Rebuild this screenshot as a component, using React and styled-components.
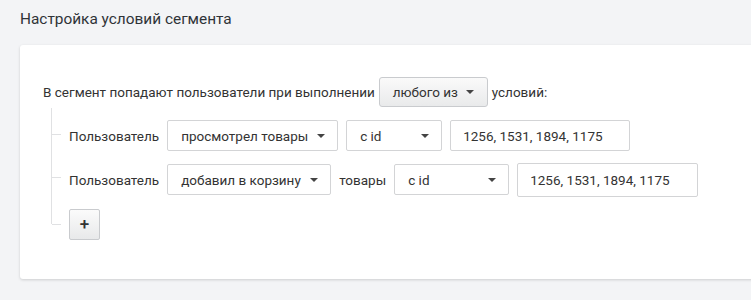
import React from "react";
import styled, { createGlobalStyle } from "styled-components";

const Global = createGlobalStyle`
  html, body { margin: 0; padding: 0; background: #f3f4f6; }
  body { font-family: Roboto, "Noto Sans", Arial, sans-serif; color: #333; }
`;

const Page = styled.div`
  width: 751px;
  height: 300px;
  overflow: hidden;
  box-sizing: border-box;
  padding: 10px 0 0 20px;
`;

const Title = styled.h2`
  margin: 0;
  font-size: 15.4px;
  font-weight: 400;
  line-height: 18px;
  color: #2f3338;
`;

const Card = styled.div`
  margin-top: 17px;
  width: 760px;
  height: 234px;
  box-sizing: border-box;
  background: #fff;
  border-radius: 3px;
  box-shadow: 0 1px 3px rgba(0, 0, 0, 0.16);
  padding: 32px 0 0 23px;
  font-size: 13.5px;
  color: #333;
`;

const Line = styled.div`
  display: flex;
  align-items: center;
  height: ${(p) => p.$h || 30}px;
  gap: ${(p) => p.$gap || 9}px;
`;

const Text = styled.span`
  white-space: nowrap;
`;

const Dropdown = styled.button`
  display: flex;
  align-items: center;
  justify-content: space-between;
  box-sizing: border-box;
  height: 30px;
  width: 109px;
  padding: 0 13px 0 13px;
  border: 1px solid #c9cbce;
  border-radius: 3px;
  background: linear-gradient(#fafafa, #e9eaeb);
  font: inherit;
  color: #333;
`;

const Select = styled.div`
  display: flex;
  align-items: center;
  justify-content: space-between;
  box-sizing: border-box;
  width: ${(p) => p.$w}px;
  height: ${(p) => p.$h || 31}px;
  padding: 0 12px 0 13px;
  border: 1px solid #d3d4d6;
  border-radius: 2px;
  background: #fff;
`;

const Input = styled.div`
  display: flex;
  align-items: center;
  box-sizing: border-box;
  width: ${(p) => p.$w}px;
  height: ${(p) => p.$h || 31}px;
  padding: 0 12px;
  border: 1px solid #d3d4d6;
  border-radius: 2px;
  background: #fff;
`;

const Caret = styled.span`
  width: 0;
  height: 0;
  border-left: 4px solid transparent;
  border-right: 4px solid transparent;
  border-top: 4px solid #444;
`;

const Tree = styled.div`
  margin: 1px 0 0 9px;
  padding-left: 17px;
`;

const Item = styled.div`
  position: relative;
  padding-top: ${(p) => p.$pt}px;
  &::before {
    content: "";
    position: absolute;
    left: -18px;
    top: 0;
    width: 1px;
    ${(p) => (p.$last ? `height: ${p.$pt + 15}px;` : "bottom: 0;")}
    background: #e0e1e3;
  }
  &::after {
    content: "";
    position: absolute;
    left: -17px;
    top: ${(p) => p.$pt + p.$mid}px;
    width: 9px;
    height: 1px;
    background: #e0e1e3;
  }
`;

const PlusButton = styled.button`
  box-sizing: border-box;
  width: 31px;
  height: 31px;
  border: 1px solid #c9cbce;
  border-radius: 2px;
  background: linear-gradient(#fbfbfb, #e8e9ea);
  font: 500 17px Roboto, Arial, sans-serif;
  color: #333;
  display: flex;
  align-items: center;
  justify-content: center;
  padding: 0 0 2px 0;
`;

function Sel({ w, h, children }) {
  return (
    <Select $w={w} $h={h}>
      <Text>{children}</Text>
      <Caret />
    </Select>
  );
}

export default function App() {
  return (
    <Page>
      <Global />
      <Title>Настройка условий сегмента</Title>
      <Card>
        <Line $gap={4}>
          <Text>В сегмент попадают пользователи при выполнении</Text>
          <Dropdown>
            <span>любого из</span>
            <Caret />
          </Dropdown>
          <Text>условий:</Text>
        </Line>
        <Tree>
          <Item $pt={12} $mid={14}>
            <Line $h={31} $gap={8}>
              <Text>Пользователь</Text>
              <Sel w={171}>просмотрел товары</Sel>
              <Sel w={96}>c id</Sel>
              <Input $w={180}>1256, 1531, 1894, 1175</Input>
            </Line>
          </Item>
          <Item $pt={12} $mid={14}>
            <Line $h={33} $gap={8}>
              <Text>Пользователь</Text>
              <Sel w={164}>добавил в корзину</Sel>
              <Text>товары</Text>
              <Sel w={115}>c id</Sel>
              <Input $w={181} $h={34}>1256, 1531, 1894, 1175</Input>
            </Line>
          </Item>
          <Item $pt={13} $mid={15} $last>
            <PlusButton>+</PlusButton>
          </Item>
        </Tree>
      </Card>
    </Page>
  );
}
